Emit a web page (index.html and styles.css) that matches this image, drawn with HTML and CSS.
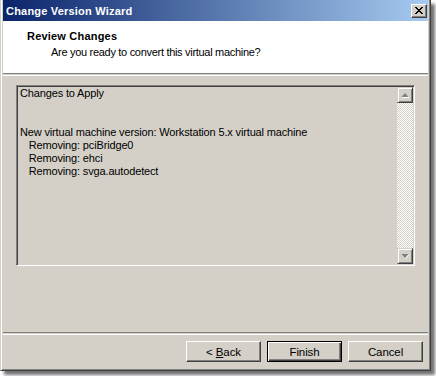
FILE: index.html
```html
<!DOCTYPE html>
<html>
<head>
<meta charset="utf-8">
<link rel="stylesheet" href="styles.css">
</head>
<body>
<div class="window">
  <div class="titlebar">
    <span class="title">Change Version Wizard</span>
    <span class="close"><svg width="8" height="7" viewBox="0 0 8 7"><path d="M0 0h2v1h1v1h2v-1h1v-1h2v1h-1v1h-1v1h-1v1h1v1h1v1h1v1h-2v-1h-1v-1h-2v1h-1v1h-2v-1h1v-1h1v-1h1v-1h-1v-1h-1v-1h-1z" fill="#000"/></svg></span>
  </div>
  <div class="header">
    <div class="h-title">Review Changes</div>
    <div class="h-sub">Are you ready to convert this virtual machine?</div>
  </div>
  <div class="sep"></div>
  <div class="content">
    <div class="textbox">
      <div class="text">Changes to Apply


New virtual machine version: Workstation 5.x virtual machine
   Removing: pciBridge0
   Removing: ehci
   Removing: svga.autodetect</div>
      <div class="scrollbar">
        <div class="sbtn"><svg width="14" height="14" viewBox="0 0 14 14"><path d="M7 5l3.5 4h-7z" fill="#808080"/><path d="M4 9.5h7" stroke="#fff" stroke-width="1"/></svg></div>
        <div class="track"></div>
        <div class="sbtn"><svg width="14" height="14" viewBox="0 0 14 14"><path d="M3.5 5h7l-3.5 4z" fill="#808080"/><path d="M7.5 9.5l3.5-4" stroke="#fff" stroke-width="1"/></svg></div>
      </div>
    </div>
  </div>
  <div class="sep"></div>
  <div class="buttons">
    <div class="btn"><span>&lt; <u>B</u>ack</span></div>
    <div class="btn default"><span>Finish</span></div>
    <div class="btn"><span>Cancel</span></div>
  </div>
</div>
</body>
</html>
```
FILE: styles.css
```css
html, body {
  margin: 0;
  padding: 0;
  background: #ffffff;
}
body {
  width: 436px;
  height: 376px;
  overflow: hidden;
  font-family: "Liberation Sans", Arial, sans-serif;
  font-size: 11px;
  color: #000;
}
.window {
  width: 431px;
  height: 371px;
  box-sizing: border-box;
  background: #d4d0c8;
  border-left: 1px solid #d4d0c8;
  border-right: 1px solid #404040;
  border-bottom: 1px solid #404040;
  box-shadow: inset 1px 0 #ffffff, inset -1px -1px #808080, 4px 4px 3px rgba(0,0,0,0.55);
  padding: 0 2px 2px 2px;
  display: flex;
  flex-direction: column;
}
.titlebar {
  height: 21px;
  flex: none;
  background: linear-gradient(to right, #0a246a, #a6caf0);
  display: flex;
  align-items: center;
  justify-content: space-between;
  padding: 0 1px 0 3px;
}
.title {
  color: #fff;
  font-weight: bold;
  font-size: 11px;
  letter-spacing: 0.2px;
}
.close {
  width: 16px;
  height: 14px;
  box-sizing: border-box;
  background: #d4d0c8;
  border-top: 1px solid #fff;
  border-left: 1px solid #fff;
  border-right: 1px solid #404040;
  border-bottom: 1px solid #404040;
  box-shadow: inset -1px -1px #808080;
  display: flex;
  align-items: center;
  justify-content: center;
}
.close svg { display: block; margin: 0 0 1px 0; }
.header {
  height: 52px;
  flex: none;
  background: #fff;
  box-sizing: border-box;
  padding: 9px 0 0 24px;
  line-height: 13px;
}
.h-title {
  font-weight: bold;
  font-size: 11px;
  letter-spacing: 0.2px;
}
.h-sub {
  margin-top: 3px;
  padding-left: 24px;
  letter-spacing: -0.3px;
}
.sep {
  height: 1px;
  flex: none;
  border-top: 1px solid #808080;
  border-bottom: 1px solid #fff;
}
.content {
  flex: 1;
  padding: 9px 0 0 13px;
}
.textbox {
  width: 399px;
  height: 181px;
  box-sizing: border-box;
  border-top: 1px solid #808080;
  border-left: 1px solid #808080;
  border-right: 1px solid #fff;
  border-bottom: 1px solid #fff;
  box-shadow: inset 1px 1px #404040, inset -1px -1px #d4d0c8;
  padding: 1px;
  display: flex;
}
.text {
  flex: 1;
  white-space: pre;
  line-height: 13px;
  padding: 0 0 0 2px;
  overflow: hidden;
  letter-spacing: -0.15px;
}
.scrollbar {
  width: 16px;
  display: flex;
  flex-direction: column;
}
.sbtn {
  width: 16px;
  height: 16px;
  box-sizing: border-box;
  background: #d4d0c8;
  border-top: 1px solid #d4d0c8;
  border-left: 1px solid #d4d0c8;
  border-right: 1px solid #404040;
  border-bottom: 1px solid #404040;
  box-shadow: inset 1px 1px #fff, inset -1px -1px #808080;
  flex: none;
}
.sbtn svg { display: block; }
.track {
  flex: 1;
  background: repeating-conic-gradient(#ffffff 0 25%, #d4d0c8 0 50%) 0 0 / 2px 2px;
}
.buttons {
  height: 33px;
  flex: none;
  display: flex;
  justify-content: flex-end;
  gap: 6px;
  padding: 6px 5px 0 0;
  box-sizing: border-box;
}
.btn {
  width: 75px;
  height: 21px;
  box-sizing: border-box;
  border-top: 1px solid #fff;
  border-left: 1px solid #fff;
  border-right: 1px solid #404040;
  border-bottom: 1px solid #404040;
  box-shadow: inset -1px -1px #808080;
  display: flex;
  align-items: center;
  justify-content: center;
  font-size: 11.5px;
  letter-spacing: -0.1px;
}
.btn.default {
  border: 1px solid #000;
  box-shadow: inset 1px 1px #fff, inset -1px -1px #404040, inset -2px -2px #808080;
}
```
